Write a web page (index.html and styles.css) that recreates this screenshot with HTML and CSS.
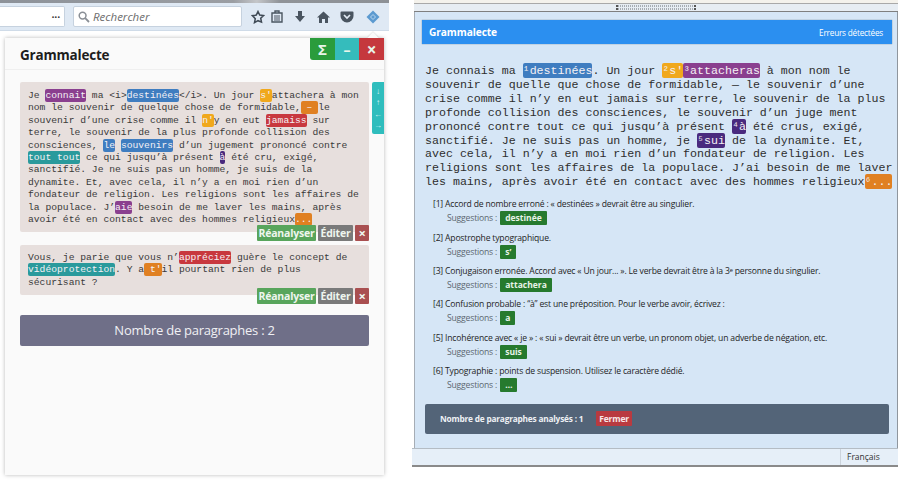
FILE: index.html
```html
<!DOCTYPE html>
<html lang="fr">
<head>
<meta charset="utf-8">
<title>Grammalecte</title>
<link rel="stylesheet" href="styles.css">
</head>
<body>
<main class="page">
  <section class="left">
    <div class="topstrip"></div>
    <div class="toolbar">
      <div class="urlbar"><span class="dots">•••</span></div>
      <div class="search">
        <svg class="ic-search" width="12" height="12" viewBox="0 0 12 12"><circle cx="4.6" cy="4.6" r="3.4" fill="none" stroke="#8a8f96" stroke-width="1.5"/><path d="M7.2 7.2L11 11" stroke="#8a8f96" stroke-width="1.8"/></svg>
        <span>Rechercher</span>
      </div>
      <div class="tools">
        <svg width="14" height="14" viewBox="0 0 14 14"><path d="M7 1.5l1.7 3.6 3.9.5-2.9 2.6.8 3.9L7 10.700l-3.500 1.900.8-3.900L1.400 5.600l3.900-.5z" fill="none" stroke="#3f4a55" stroke-width="1.500"/></svg>
        <svg class="lib" width="12" height="13" viewBox="0 0 12 13"><path d="M1 3h10v9H1zM4 3V1h4v2" fill="none" stroke="#4a5560" stroke-width="1.400"/><path d="M3 6h6M3 8h6M3 10h6" stroke="#4a5560"/></svg>
        <svg class="dl" width="12" height="13" viewBox="0 0 12 13"><path d="M4 1h4v5h3l-5 6-5-6h3z" fill="#4a5560"/></svg>
        <svg class="home" width="13" height="12" viewBox="0 0 13 12"><path d="M6.500 0.500L13 6.500h-2V12H8V8H5v4H2V6.500H0z" fill="#4a5560"/></svg>
        <svg class="pocket" width="14" height="12" viewBox="0 0 14 12"><path d="M1.500 0.500h11a1 1 0 0 1 1 1V5a6.500 6.500 0 0 1-13 0V1.500a1 1 0 0 1 1-1z" fill="#4a5560"/><path d="M4 4l3 3 3-3" fill="none" stroke="#e3ecf5" stroke-width="1.700"/></svg>
        <svg class="gl" width="14" height="14" viewBox="0 0 14 14"><path d="M7 0.500L13.500 7 7 13.500 0.500 7z" fill="#5c9ad0"/><path d="M7 4.500L9.500 7 7 9.500 4.500 7z" fill="none" stroke="#b9d6ee"/></svg>
      </div>
    </div>
    <div class="panel">
      <span class="notch"></span>
      <header class="panel-head">
        <h1>Grammalecte</h1>
        <div class="winbtns">
          <span class="wb wb-sum">Σ</span><span class="wb wb-min">–</span><span class="wb wb-close">×</span>
        </div>
      </header>
      <div class="panel-body">
        <div class="para-row">
          <p class="para">Je <span class="m-purple">connait</span> ma &lt;i&gt;<span class="m-blue">destinées</span>&lt;/i&gt;. Un jour <span class="m-yellow">s'</span>attachera à mon<br>nom le souvenir de quelque chose de formidable,<span class="m-orange"> – </span>le<br>souvenir d’une crise comme il <span class="m-yellow">n'</span>y en eut <span class="m-red">jamaiss</span> sur<br>terre, le souvenir de la plus profonde collision des<br>consciences, <span class="m-blue">le</span> <span class="m-blue">souvenirs</span> d’un jugement prononcé contre<br><span class="m-teal">tout tout</span> ce qui jusqu’à présent <span class="m-dark">à</span> été cru, exigé,<br>sanctifié. Je ne suis pas un homme, je suis de la<br>dynamite. Et, avec cela, il n’y a en moi rien d’un<br>fondateur de religion. Les religions sont les affaires de<br>la populace. J’<span class="m-purple">aie</span> besoin de me laver les mains, après<br>avoir été en contact avec des hommes religieux<span class="m-orange">...</span></p>
          <div class="side"><span>↓</span><span>↑</span><span>←</span><span>→</span></div>
        </div>
        <div class="actions"><span class="act act-go">Réanalyser</span><span class="act act-edit">Éditer</span><span class="act act-x">×</span></div>
        <div class="para-row para-row-2">
          <p class="para para-short">Vous, je parie que vous n’<span class="m-red">appréciez</span> guère le concept de<br><span class="m-teal">vidéoprotection</span>. Y a<span class="m-orange"> t'</span>il pourtant rien de plus<br>sécurisant ?</p>
        </div>
        <div class="actions"><span class="act act-go">Réanalyser</span><span class="act act-edit">Éditer</span><span class="act act-x">×</span></div>
        <div class="count">Nombre de paragraphes : 2</div>
      </div>
    </div>
  </section>

  <section class="right">
    <div class="r-top"></div>
    <div class="r-splitter"><span class="grip"></span><span class="grip"></span></div>
    <div class="r-window">
      <header class="r-head"><strong>Grammalecte</strong><span>Erreurs détectées</span></header>
      <p class="r-text">Je connais ma <span class="m-blue">¹destinées</span>. Un jour <span class="m-yellow">²s'</span><span class="m-purple">³attacheras</span> à mon nom le<br>souvenir de quelle que chose de formidable, — le souvenir d’une<br>crise comme il n’y en eut jamais sur terre, le souvenir de la plus<br>profonde collision des consciences, le souvenir d’un juge ment<br>prononcé contre tout ce qui jusqu’à présent <span class="m-dark">⁴à</span> été crus, exigé,<br>sanctifié. Je ne suis pas un homme, je <span class="m-dark">⁵sui</span> de la dynamite. Et,<br>avec cela, il n’y a en moi rien d’un fondateur de religion. Les<br>religions sont les affaires de la populace. J’ai besoin de me laver<br>les mains, après avoir été en contact avec des hommes religieux<span class="m-orange">⁶...</span></p>
      <ul class="errors">
        <li><div>[1] Accord de nombre erroné : « destinées » devrait être au singulier.</div><div class="sugg">Suggestions : <b>destinée</b></div></li>
        <li><div>[2] Apostrophe typographique.</div><div class="sugg">Suggestions : <b>s’</b></div></li>
        <li><div>[3] Conjugaison erronée. Accord avec « Un jour... ». Le verbe devrait être à la 3ᵉ personne du singulier.</div><div class="sugg">Suggestions : <b>attachera</b></div></li>
        <li><div>[4] Confusion probable : “à” est une préposition. Pour le verbe avoir, écrivez :</div><div class="sugg">Suggestions : <b>a</b></div></li>
        <li><div>[5] Incohérence avec « je » : « sui » devrait être un verbe, un pronom objet, un adverbe de négation, etc.</div><div class="sugg">Suggestions : <b>suis</b></div></li>
        <li><div>[6] Typographie : points de suspension. Utilisez le caractère dédié.</div><div class="sugg">Suggestions : <b>…</b></div></li>
      </ul>
      <div class="r-foot"><span>Nombre de paragraphes analysés : 1</span><span class="fermer">Fermer</span></div>
    </div>
    <footer class="status"><span>Français</span></footer>
  </section>
</main>
</body>
</html>
```

FILE: styles.css
```css
* { box-sizing: border-box; }
html, body { margin: 0; padding: 0; background: #fff; }
.page { display: flex; width: 900px; height: 484px; overflow: hidden; font-family: "Open Sans", sans-serif; }

/* Left capture */
.left { width: 412px; flex: none; }
.topstrip { width: 389px; height: 3px; background: linear-gradient(90deg, #8d9299 0, #9b9ea3 60%, #c4c6c9 66%, #8f9398 72%, #8d9196 100%); }
.toolbar { width: 389px; height: 28px; background: #dfe9f4; border-bottom: 1px solid #cfdbe8; display: flex; align-items: center; }
.urlbar { width: 65px; height: 21px; background: #fff; border: 1px solid #c6d2df; border-left: 0; border-radius: 0 2px 2px 0; display: flex; align-items: center; justify-content: flex-end; padding-right: 4px; margin-right: 8px; }
.dots { font-size: 8px; color: #3c3c3c; letter-spacing: -0.2px; }
.search { width: 169px; height: 21px; background: #fff; border: 1px solid #c6d2df; border-radius: 2px; display: flex; align-items: center; padding-left: 4px; gap: 3px; font-size: 11.500px; font-style: italic; color: #6d6d6d; }
.tools { display: flex; align-items: center; margin-left: 9px; }
.lib { margin-left: 6px; }
.dl { margin-left: 11px; }
.home { margin-left: 11px; }
.pocket { margin-left: 10px; }
.gl { margin-left: 12px; }

.panel { position: relative; width: 379px; height: 437px; margin: 7px 0 0 5px; background: #fafafa; box-shadow: 0 0 4px rgba(0, 0, 0, 0.28); }
.notch { position: absolute; top: -4px; right: 7px; width: 8px; height: 8px; background: #fafafa; transform: rotate(45deg); box-shadow: -1px -1px 1px rgba(0, 0, 0, 0.08); }
.panel-head { position: relative; display: flex; justify-content: space-between; height: 32px; border-bottom: 1px solid #efefef; }
.panel-head h1 { margin: 8px 0 0 15px; font-size: 13.500px; line-height: 18px; font-weight: 700; color: #1d1d1d; letter-spacing: -0.2px; }
.winbtns { display: flex; height: 22px; }
.wb { width: 24.600px; display: flex; align-items: center; justify-content: center; color: #e8f5ea; font-weight: 700; }
.wb-sum { background: #2a9c3c; font-size: 15px; border-radius: 0 0 0 3px; }
.wb-min { background: #35bcbc; font-size: 14px; }
.wb-close { background: #c5383d; font-size: 17px; }
.panel-body { padding: 12px 0 0 15px; }
.para-row { position: relative; width: 349px; }
.para-row-2 { margin-top: 4px; }
.para { margin: 0; height: 150px; padding: 8px 0 0 8px; background: #e7dfdd; border-radius: 2px; font: 9.680px/12.400px "Liberation Mono", monospace; color: #3a3a3a; white-space: nowrap; }
.para-short { height: 50px; padding-top: 7px; }
.side { position: absolute; top: 0; left: 352px; width: 12px; height: 52px; background: #2fbdbd; border-radius: 2px 0 0 2px; display: flex; flex-direction: column; align-items: center; justify-content: space-around; color: #dff5f5; font-size: 8px; line-height: 10px; padding: 3px 0; }
.actions { display: flex; justify-content: flex-end; gap: 2px; width: 349px; height: 16px; margin-top: -7px; position: relative; }
.act { display: flex; align-items: center; justify-content: center; height: 16px; color: #eef5ee; font-size: 10.500px; font-weight: 700; letter-spacing: -0.2px; border-radius: 1px; }
.act-go { width: 59px; background: #58a55c; }
.act-edit { width: 35px; background: #7a7a7a; }
.act-x { width: 14px; background: #a94f50; font-size: 13px; }
.count { width: 349px; height: 31px; margin-top: 11px; background: #6f6f88; border-radius: 2px; color: #f0f0f4; font-size: 13px; letter-spacing: -0.25px; line-height: 31px; text-align: center; }

/* Right capture */
.right { width: 486px; flex: none; height: 467px; display: flex; flex-direction: column; }
.r-top { height: 4px; margin-left: 2px; background: #f4f2ec; border-bottom: 1px solid #a9a9a9; }
.r-splitter { height: 8px; margin-left: 2px; background: #e7edf3; border-bottom: 1px solid #7f7f7f; display: flex; flex-direction: column; align-items: center; justify-content: center; gap: 1px; }
.grip { display: block; width: 80px; height: 2px; border-left: 2px solid #555; border-right: 2px solid #555; background: repeating-linear-gradient(90deg, #a8adb3 0 1px, transparent 1px 2px); }
.r-window { flex: 1; margin-left: 2px; background: #d6e6f6; border-left: 1px solid #a6adb5; border-right: 1px solid #8f969e; padding: 8px 5px 0 7px; min-height: 0; }
.r-head { display: flex; justify-content: space-between; align-items: center; height: 24px; background: #2b8ff0; color: #fff; padding: 0 9px 0 7px; box-shadow: 0 0 1px #5a6f85; }
.r-head strong { font-size: 10.200px; letter-spacing: -0.1px; }
.r-head span { font-size: 8.200px; letter-spacing: -0.2px; }
.r-text { margin: 20px 0 0 3px; font: 11.640px/13.900px "Liberation Mono", monospace; color: #2e2e2e; white-space: nowrap; }
.errors { list-style: none; margin: 9px 0 0 11px; padding: 0; font-size: 8.600px; line-height: 12px; color: #1e1e1e; letter-spacing: -0.18px; }
.errors li { height: 33.400px; white-space: nowrap; }
.sugg { display: flex; align-items: center; gap: 3px; height: 14px; margin-top: 1px; margin-left: 14px; color: #5c6670; }
.sugg b { display: block; height: 14px; line-height: 13px; padding: 0 5px; background: #267a2e; color: #e8f3e8; border-radius: 1px; font-size: 8.500px; letter-spacing: 0; }
.r-foot { display: flex; align-items: center; gap: 13px; height: 30px; margin: 5px 0 0 3px; width: 464px; padding-left: 15px; background: #536478; border-radius: 2px; color: #eef1f4; font-size: 8.300px; letter-spacing: -0.2px; font-weight: 700; }
.fermer { height: 15px; line-height: 15px; padding: 0 3px; background: #b93a40; border-radius: 1px; font-size: 8.500px; color: #f7e8e8; }
.status { height: 19px; flex: none; background: #e6eff8; border-top: 1px solid #b4bcc4; border-bottom: 2px solid #8a8a8a; display: flex; justify-content: flex-end; font-size: 8.500px; color: #333; }
.status span { width: 58px; border-left: 1px solid #ccd4dc; padding-left: 6px; line-height: 16px; }

/* Error marks */
.m-purple, .m-blue, .m-yellow, .m-orange, .m-red, .m-teal, .m-dark { padding: 1px 0; border-radius: 2px; color: #f4f0f4; }
.m-purple { background: #8a3f8f; }
.m-blue { background: #3f7dc0; }
.m-yellow { background: #f0a81c; }
.m-orange { background: #e08022; }
.m-red { background: #c8383e; }
.m-teal { background: #2a9a9c; }
.m-dark { background: #4a2a7e; }
```
